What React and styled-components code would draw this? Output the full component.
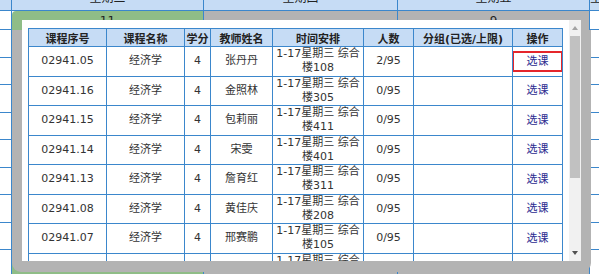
import React from 'react';
import styled, { createGlobalStyle } from 'styled-components';

const GlobalStyle = createGlobalStyle`
  html, body { margin: 0; padding: 0; background: #fff; }
  body { font-family: "DejaVu Sans", "Noto Sans CJK SC", sans-serif; overflow: hidden; }
`;

const LINE = '#3b87cc';

const Page = styled.div`
  position: relative;
  width: 599px;
  height: 274px;
  overflow: hidden;
  background: #fff;
`;

const BgGrid = styled.div`
  display: grid;
  grid-template-columns: 12px 192px 194px 192px 1fr;
  margin-top: -12px;
`;

const BgColumn = styled.div`
  display: flex;
  flex-direction: column;
  border-right: 1px solid ${LINE};
`;

const BgHead = styled.div`
  height: 23px;
  box-sizing: border-box;
  background: #c6dcf5;
  border-bottom: 1px solid ${LINE};
  font-size: 12px;
  line-height: 20px;
  text-align: center;
  color: #222;
  white-space: nowrap;
  overflow: hidden;
`;

const BgSlot = styled.div`
  height: ${(p) => p.$h}px;
  box-sizing: border-box;
  border-bottom: 1px solid ${LINE};
`;

const BgCourse = styled.div`
  height: 300px;
  background: ${(p) => p.$bg};
  border-top-left-radius: ${(p) => (p.$round ? '4px' : '0')};
  font-size: 12px;
  line-height: 14px;
  padding-top: 3px;
  text-align: center;
  color: #222;
`;

const Shade = styled.div`
  position: absolute;
  left: 12px;
  top: 30px;
  width: 579px;
  height: 242px;
  background: #b3b3b3;
  border-radius: 0 0 9px 9px;
`;

const Dialog = styled.div`
  position: absolute;
  left: 22px;
  top: 20px;
  width: 559px;
  height: 241px;
  background: #fff;
  display: flex;
`;

const Scroller = styled.div`
  flex: 1;
  overflow: hidden;
  padding: 8px 0 0 6px;
`;

const ScrollBar = styled.div`
  width: 12px;
  background: #f1f1f1;
  display: flex;
  flex-direction: column;
`;

const ScrollBtn = styled.div`
  height: 16px;
  display: flex;
  align-items: center;
  justify-content: center;
`;

const Arrow = styled.div`
  width: 0;
  height: 0;
  border-left: 3px solid transparent;
  border-right: 3px solid transparent;
  ${(p) =>
    p.$down
      ? `border-top: 4px solid #505050;`
      : `border-bottom: 4px solid #a3a3a3;`}
`;

const Thumb = styled.div`
  height: 142px;
  margin: 0 1px;
  background: #c1c1c1;
`;

const Track = styled.div`
  flex: 1;
`;

const Table = styled.table`
  border-collapse: collapse;
  table-layout: fixed;
  width: 534px;
  font-size: 11px;
  color: #333;
`;

const Th = styled.th`
  background: #c6dcf5;
  border: 1px solid ${LINE};
  height: 17px;
  padding: 0;
  font-weight: bold;
  color: #222;
  text-align: center;
  white-space: nowrap;
`;

const Td = styled.td`
  border: 1px solid ${LINE};
  height: 28.5px;
  padding: 0;
  text-align: center;
  line-height: 14px;
  white-space: nowrap;
`;

const PickLink = styled.a`
  display: block;
  height: 21px;
  box-sizing: border-box;
  margin: 0 -1px;
  line-height: 17px;
  color: #2b2b90;
  text-decoration: none;
  border: 2px solid ${(p) => (p.$focused ? '#e5262b' : 'transparent')};
`;

const widths = [78, 78, 26, 62, 91, 50, 99, 50];
const heads = ['课程序号', '课程名称', '学分', '教师姓名', '时间安排', '人数', '分组(已选/上限)', '操作'];

const rows = [
  { id: '02941.05', teacher: '张丹丹', room: '108', count: '2/95', focused: true },
  { id: '02941.16', teacher: '金照林', room: '305', count: '0/95' },
  { id: '02941.15', teacher: '包莉丽', room: '411', count: '0/95' },
  { id: '02941.14', teacher: '宋雯', room: '401', count: '0/95' },
  { id: '02941.13', teacher: '詹育红', room: '311', count: '0/95' },
  { id: '02941.08', teacher: '黄佳庆', room: '208', count: '0/95' },
  { id: '02941.07', teacher: '邢赛鹏', room: '105', count: '0/95' },
  { id: '02941.06', teacher: '李晓燕', room: '207', count: '0/95' },
];

const slots = Array.from({ length: 12 }, (_, i) => i);

export default function App() {
  return (
    <Page>
      <GlobalStyle />
      <BgGrid>
        <BgColumn>
          <BgHead />
          <BgSlot $h={19} />
          {slots.map((i) => (
            <BgSlot key={i} $h={27.5} />
          ))}
        </BgColumn>
        <BgColumn>
          <BgHead>星期三</BgHead>
          <BgCourse $bg="#8fbd87" $round>11</BgCourse>
        </BgColumn>
        <BgColumn>
          <BgHead>星期四</BgHead>
          <BgCourse $bg="#b3b3b3"></BgCourse>
        </BgColumn>
        <BgColumn>
          <BgHead>星期五</BgHead>
          <BgCourse $bg="#b3b3b3">9</BgCourse>
        </BgColumn>
        <BgColumn>
          <BgHead>星期六</BgHead>
          <BgSlot $h={19} />
          {slots.map((i) => (
            <BgSlot key={i} $h={27.5} />
          ))}
        </BgColumn>
      </BgGrid>

      <Shade />
      <Dialog>
        <Scroller>
          <Table>
            <colgroup>
              {widths.map((w, i) => (
                <col key={i} style={{ width: w }} />
              ))}
            </colgroup>
            <thead>
              <tr>
                {heads.map((h) => (
                  <Th key={h}>{h}</Th>
                ))}
              </tr>
            </thead>
            <tbody>
              {rows.map((r) => (
                <tr key={r.id}>
                  <Td>{r.id}</Td>
                  <Td>经济学</Td>
                  <Td>4</Td>
                  <Td>{r.teacher}</Td>
                  <Td>
                    1-17星期三 综合
                    <br />楼{r.room}
                  </Td>
                  <Td>{r.count}</Td>
                  <Td></Td>
                  <Td>
                    <PickLink href="#" $focused={r.focused}>选课</PickLink>
                  </Td>
                </tr>
              ))}
            </tbody>
          </Table>
        </Scroller>
        <ScrollBar>
          <ScrollBtn>
            <Arrow />
          </ScrollBtn>
          <Thumb />
          <Track />
          <ScrollBtn>
            <Arrow $down />
          </ScrollBtn>
        </ScrollBar>
      </Dialog>
    </Page>
  );
}
